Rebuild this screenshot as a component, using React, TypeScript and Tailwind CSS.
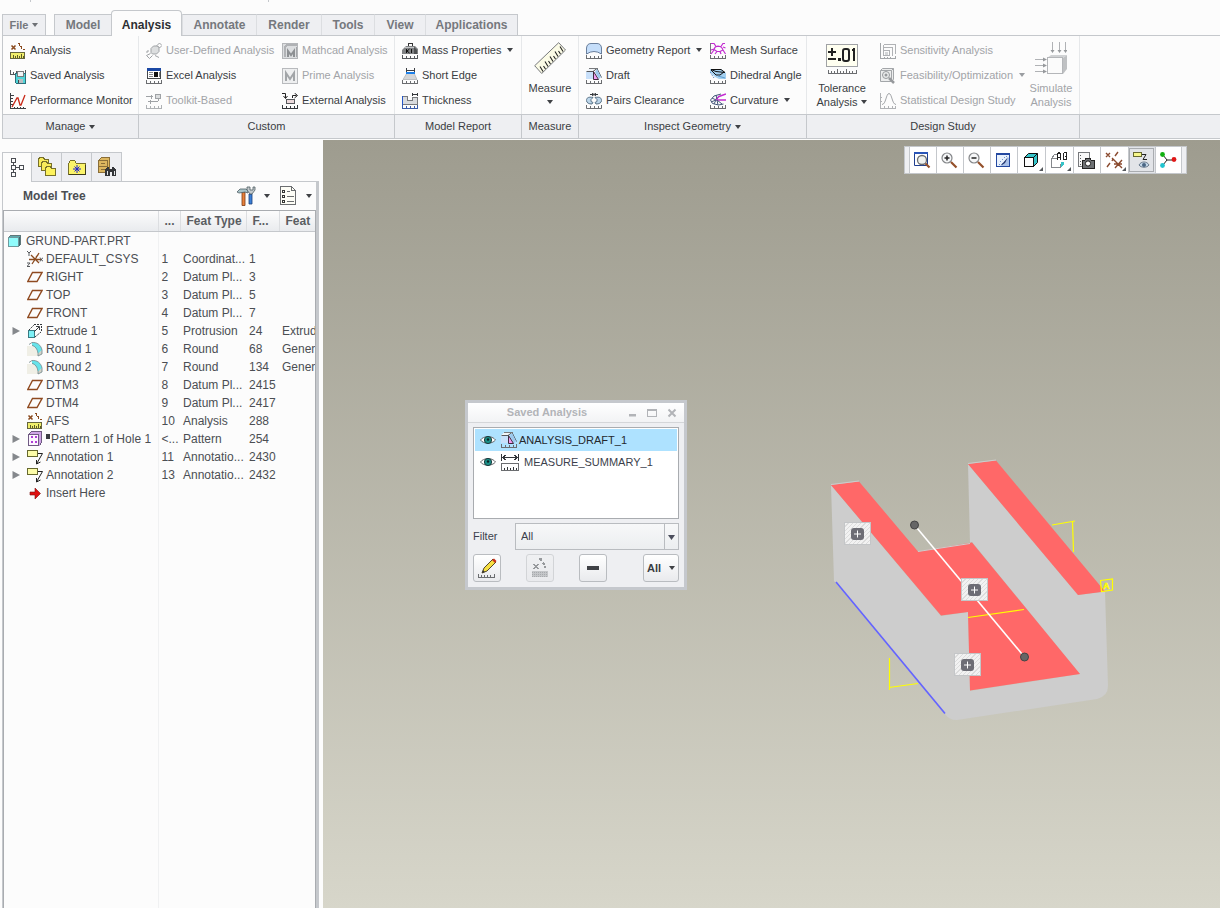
import React from 'react';

type IconProps = { children: React.ReactNode; size?: string; box?: string; smooth?: boolean };

function Svg({ children, size = 'size-4', box = '0 0 16 16', smooth }: IconProps) {
  return (
    <svg
      className={`${size} shrink-0`}
      viewBox={box}
      fill="none"
      aria-hidden="true"
      shapeRendering={smooth ? 'auto' : 'crispEdges'}
    >
      {children}
    </svg>
  );
}

function Scale({ color = '#6b6d70' }: { color?: string }) {
  return <path d="M.5 12v3.5h15V12M4.5 13v2M8.5 13v2M12.5 13v2" stroke={color} />;
}

function Arrow({ className = 'text-[#3f4145]' }: { className?: string }) {
  return (
    <svg className={`h-1 w-1.5 shrink-0 ${className}`} viewBox="0 0 6 4" aria-hidden="true">
      <path d="M0 0h6L3 4z" fill="currentColor" />
    </svg>
  );
}

/* ---------- ribbon icons ---------- */

const AnalysisIcon = () => (
  <Svg>
    <path d="M1.500 2.500l4 4M5.500 2.500l-4 4" stroke="#8a4a1e" strokeWidth="1.600" shapeRendering="auto" />
    <path d="M8 .5h2M9.500 1v2M10 3.500h2M11.500 4v2M13 6.500h2" stroke="#8a4a1e" strokeWidth="1.200" />
    <path d="M.5 9.500h14v6H.5z" fill="#f0ee6c" stroke="#66663c" />
    <path d="M3.500 12v3M5.500 13v2M7.500 12v3M9.500 13v2M11.500 11v4M13.500 13v2" stroke="#5c5c28" />
  </Svg>
);
const SavedIcon = () => (
  <Svg>
    <path d="M.5 2v5M.5 6.500h5M3.500 4v2M6.500 3v3M9.500 4v2M12.500 3v3M15.500 2v4" stroke="#55585c" />
    <path d="M5.500 5.500h10v10h-9l-1-1z" fill="#4fd5d8" stroke="#2e6f7a" />
    <path d="M7.500 3.500h6v5h-6z" fill="#f2f4f6" stroke="#77797c" />
    <path d="M8 11h5v4H8z" fill="#b9bdc0" />
    <path d="M8.500 12v3" stroke="#44474b" />
  </Svg>
);
const PerfIcon = () => (
  <Svg>
    <path d="M.5 0v15.500H16M.5 2.500h3M.5 5.500h2M.5 8.500h2M.5 11.500h2M4.500 14v1M7.500 14v1M10.500 14v1M13.500 14v1" stroke="#3c3f44" />
    <path d="M2 14l5-9h1l2 7h1l4-10" stroke="#c82818" strokeWidth="1.300" shapeRendering="auto" />
  </Svg>
);
const UdaIcon = () => (
  <Svg smooth>
    <path d="M5 5.500L7.500 3h4L13 4.500v4L10.500 11h-4L5 9.500z" fill="#dcdedf" stroke="#9fa2a5" />
    <path d="M11 2.500L13.500 0 16 2.500 13.500 5zM4.500 10.500L.5 12.500l3 3 3-3M3 8H1v2M9 12.500l4 2" stroke="#9fa2a5" />
  </Svg>
);
const ExcelIcon = () => (
  <Svg>
    <path d="M1.500 1.500h13v9h-13z" fill="#fff" stroke="#44474b" />
    <path d="M1 0h14v3H1z" fill="#1b48a4" />
    <path d="M8 4h4v5H8z" fill="#111" />
    <path d="M3 4.500h4M3 6.500h4M3 8.500h4M13 4v5" stroke="#84878b" />
    <Scale />
  </Svg>
);
const ToolkitIcon = () => (
  <Svg>
    <path d="M0 3.500h7M5.500 1.500v4M2 8.500h10M4.500 6.500v4M2.500 8v1" stroke="#9fa2a5" />
    <path d="M9.500 1.500h5v4h-5z" fill="#dcdedf" stroke="#9fa2a5" />
    <path d="M12.500 6v2" stroke="#9fa2a5" />
    <Scale color="#aeb1b4" />
  </Svg>
);
const MathcadIcon = () => (
  <Svg>
    <path d="M.5.5h15v15H.5z" fill="#dcdee0" stroke="#b4b6b9" />
    <path d="M3 14V4l2-2h10" stroke="#b0b2b5" strokeWidth="2" />
    <path d="M6 14V8l3 4 3-4v6" stroke="#8d9093" strokeWidth="2" shapeRendering="auto" />
    <path d="M14.500 4v10" stroke="#a4a6a9" />
  </Svg>
);
const PrimeIcon = () => (
  <Svg>
    <path d="M.5.5h15v15H.5z" fill="#eeeff0" stroke="#b8babd" />
    <path d="M4 13V5l4 6 4-6v8" stroke="#a2a5a8" strokeWidth="2" shapeRendering="auto" />
  </Svg>
);
const ExternalIcon = () => (
  <Svg>
    <path d="M0 .5h3.500V5M1.500 3l2 2.500 2-2.500M10.500 5V2.500h4M12.500 0l3 2.500-3 2.500" stroke="#222" shapeRendering="auto" />
    <path d="M4.500 6.500h8v4h-8z" fill="#ecdadc" stroke="#55585c" />
    <Scale color="#33363a" />
  </Svg>
);
const MassIcon = () => (
  <Svg>
    <path d="M6.500 3V.5h4V3" stroke="#333" />
    <path d="M4 3h9l3 3v5H0V7z" fill="#808284" shapeRendering="auto" />
    <path d="M3 4.500h9" stroke="#c4c6c8" />
    <path d="M12 4l3 3v4h-3z" fill="#4e5052" shapeRendering="auto" />
    <path d="M4.500 6v4M7.500 6L5 8l2.500 2M9.500 6v4" stroke="#111" shapeRendering="auto" />
    <Scale color="#55585c" />
  </Svg>
);
const ShortEdgeIcon = () => (
  <Svg>
    <path d="M4.500 0v4M12.500 0v4M5 2h7" stroke="#3c3f44" />
    <path d="M5 5h7l3 6.500H1z" fill="#d4d6d8" stroke="#9fa2a5" strokeWidth=".6" shapeRendering="auto" />
    <path d="M4 5h9" stroke="#1c7fe8" strokeWidth="2" />
    <Scale />
  </Svg>
);
const ThicknessIcon = () => (
  <Svg>
    <path d="M.5 3.500h5v4h5v-3h5v7H.5z" fill="#d9dbde" stroke="#77797c" />
    <path d="M.5 3v9" stroke="#2456c8" />
    <path d="M10.500 0v3M15.500 0v3M11 1.500h4" stroke="#33363a" />
    <Scale color="#3a5ca8" />
  </Svg>
);
const RulerIcon = () => (
  <Svg size="size-8" box="0 0 32 32" smooth>
    <path d="M.7 23.700L24.700.7 31.500 8 7.700 31.500z" fill="#fbfbe6" stroke="#77797c" />
    <path
      d="M9 29.500l-3-5M11.500 27l-2-3M14 24.500l-3-5M16.500 22l-2-3M19 19.500l-3-5M21.500 17l-2-3M24 14.500l-3-5M26.500 12l-2-3M29 9.500l-3-5"
      stroke="#222"
      strokeWidth="1.100"
    />
  </Svg>
);
const GeomIcon = () => (
  <Svg>
    <path d="M.5 11V5Q1 .5 5 .5h6q4 0 4.500 4.500v6Q8 6 .5 11z" fill="#c5defa" stroke="#6a7f9c" shapeRendering="auto" />
    <Scale />
  </Svg>
);
const DraftIcon = () => (
  <Svg>
    <path d="M0 4h7v7H0z" fill="#c8e0fa" />
    <path d="M3 .5h9L8 3.500H0z" fill="#f2f5f8" />
    <path d="M.5 3.500H7l4-3 4.500 9" stroke="#55585c" fill="none" shapeRendering="auto" />
    <path d="M3 .5h9" stroke="#77797c" />
    <path d="M11 1l4 8-2 2-4-7z" fill="#9cc8ee" shapeRendering="auto" />
    <path d="M7.500 3.500l5 8h-5z" fill="#f29cf0" stroke="#3f2a3c" shapeRendering="auto" />
    <Scale />
  </Svg>
);
const PairsIcon = () => (
  <Svg smooth>
    <path d="M4 1.500h3M9 1.500h3M6 0l2 1.500L6 3M10 0L8 1.500 10 3" stroke="#33363a" />
    <path d="M7 4.500C2 3.500.5 5 .5 7.500S3 11 6 11l1-1.500L5 8.500v-2zM9 4.500c5-1 6.500.5 6.500 3S13 11 10 11L9 9.500l2-1v-2z" fill="#bcd6ea" stroke="#5c7488" />
    <Scale />
  </Svg>
);
const MeshIcon = () => (
  <Svg>
    <path d="M.5 0v11M0 5.500h1" stroke="#77797c" />
    <path
      d="M1 .5h3l2 3h5l2-3h2M1 7l3-1M1 11l3-4M4 6.500q.5-3 4-3.500 4 .5 5 4M4 6.500l3 2h3l3-1.500M7 8.500L5 11M10 8.500l1 2.500M13 7l2.500 4M13 4l2.500 1"
      stroke="#c22bd0"
      strokeWidth="1.200"
      shapeRendering="auto"
    />
    <Scale />
  </Svg>
);
const DihedralIcon = () => (
  <Svg>
    <path d="M0 1h11l5 4v6H9L5 9 0 4z" fill="#a4d0f0" shapeRendering="auto" />
    <path d="M1 1.500h10l4 3-9-1zM1 2l5 5h4l4-3" stroke="#111" shapeRendering="auto" />
    <path d="M0 4l4 6" stroke="#3471b4" strokeDasharray="1 1" shapeRendering="auto" />
    <path d="M8 8l7 2" stroke="#5c9cd0" shapeRendering="auto" />
    <Scale />
  </Svg>
);
const CurvatureIcon = () => (
  <Svg>
    <path d="M16 1L9 3.500 6 6.500M16 7H6" stroke="#c22bd0" strokeWidth="1.500" shapeRendering="auto" />
    <path d="M11 1L4 3 .5 7l2 3.500 6 1.500 5-1M2 5l4 2M6 2l1 4M1 9l5-2M4 11l2-4M8 12l-1-5M12 11L7 7" stroke="#44587a" shapeRendering="auto" />
    <Scale />
  </Svg>
);
const ToleranceIcon = () => (
  <Svg size="size-8" box="0 0 32 32">
    <path d="M.5 2.500h31v22H.5z" fill="#fffff0" stroke="#a0a2a5" />
    <path d="M2 10h8M6 6v8M2 17h8" stroke="#222" strokeWidth="2" />
    <path d="M12 17.500h3" stroke="#222" strokeWidth="3" />
    <rect x="17" y="7" width="6" height="12" rx="2" stroke="#222" strokeWidth="2" shapeRendering="auto" />
    <path d="M26 8h2V6v13" stroke="#222" strokeWidth="2" />
    <path
      d="M2 31.500h29M2.500 28v3M5.500 29v2M8.500 29v2M11.500 27v4M14.500 29v2M17.500 29v2M20.500 27v4M23.500 29v2M26.500 29v2M30.500 28v3"
      stroke="#6b6d70"
    />
  </Svg>
);
const SensitivityIcon = () => (
  <Svg>
    <path d="M.5 0v15.500H15V13M4.500 14v1M7.500 14v1M10.500 14v1" stroke="#a3a6a9" />
    <path d="M3.500 1.500h12v9M3.500 4.500h9v8M3.500 7.500h6v5h-6zM3.500 1.500v6" stroke="#b0b2b5" />
    <path d="M5 9h3v3H5z" fill="#d4d6d8" />
  </Svg>
);
const FeasibilityIcon = () => (
  <Svg smooth>
    <path d="M.5 2.500h11v11H.5zM.5 2.500l2-2h11v11l-2 2M11.500 2.500l2-2" fill="#eceded" stroke="#a3a6a9" />
    <circle cx="6" cy="7" r="3.500" stroke="#96999c" />
    <circle cx="6" cy="7" r="1.500" fill="#96999c" />
    <path d="M9 10l5 5" stroke="#96999c" strokeWidth="2.500" />
  </Svg>
);
const StatIcon = () => (
  <Svg>
    <path d="M.5 0v15.500h15V13M4.500 13v2M8.500 13v2M12.500 13v2M0 4.500h2M0 8.500h2" stroke="#b0b2b5" />
    <path d="M2 11.500c4 0 4-11 7-11s3 11 7 11" stroke="#a3a6a9" shapeRendering="auto" />
  </Svg>
);
const SimulateIcon = () => (
  <Svg size="size-8" box="0 0 32 32">
    <path d="M17.500 0v10M24.500 0v10M30.500 0v10M0 17.500h11M0 23.500h11M0 29.500h11" stroke="#b0b2b5" />
    <path
      d="M15.500 8h4l-2 3zM22.500 8h4l-2 3zM28.500 8h4l-2 3zM8 15.500v4l4-2zM8 21.500v4l4-2zM8 27.500v4l4-2z"
      fill="#96999c"
      shapeRendering="auto"
    />
    <path d="M12 16l4-3h16l-4 3z" fill="#d0d2d4" shapeRendering="auto" />
    <path d="M28 16l4-3v14l-4 5z" fill="#bfc1c3" shapeRendering="auto" />
    <path d="M12.500 15.500h15v16h-15z" fill="#fbfbfb" stroke="#b4b6b9" />
  </Svg>
);

/* ---------- ribbon ---------- */

type CmdProps = { icon: React.ReactNode; label: string; disabled?: boolean; menu?: boolean };

function Cmd({ icon, label, disabled, menu }: CmdProps) {
  return (
    <button
      type="button"
      disabled={disabled}
      className="flex h-[25px] items-center gap-1 whitespace-nowrap text-[11px] text-[#3a3d42] disabled:text-[#a2a4a8]"
    >
      {icon}
      <span>{label}</span>
      {menu && (
        <span className="ml-0.5 pb-0.5">
          <Arrow className={disabled ? 'text-[#9a9da1]' : 'text-[#3f4145]'} />
        </span>
      )}
    </button>
  );
}

function BigCmd({
  icon,
  lines,
  disabled,
  menu,
  width,
}: {
  icon: React.ReactNode;
  lines: string[];
  disabled?: boolean;
  menu?: boolean;
  width: string;
}) {
  return (
    <button
      type="button"
      disabled={disabled}
      className={`flex flex-col items-center pt-1 text-[11px] leading-[14px] text-[#3a3d42] disabled:text-[#a2a4a8] ${width}`}
    >
      {icon}
      <span className="mt-[7px]">{lines[0]}</span>
      <span className="flex h-[14px] items-center gap-1">
        {lines[1] && <span>{lines[1]}</span>}
        {menu && <Arrow />}
      </span>
    </button>
  );
}

function Group({
  title,
  width,
  children,
  menu,
}: {
  title: string;
  width: string;
  children: React.ReactNode;
  menu?: boolean;
}) {
  return (
    <section className={`flex shrink-0 flex-col ${width}`}>
      <div className="flex h-[78px] border-r border-[#e6e8ea] pt-0.5">{children}</div>
      <h2 className="flex h-6 items-center justify-center gap-1 border-t border-r border-[#c5c8cc] bg-[#eeeff2] text-[11px] text-[#3a3d42]">
        {title}
        {menu && <Arrow />}
      </h2>
    </section>
  );
}

function Tab({ label, width, active, last, first }: { label: string; width: string; active?: boolean; last?: boolean; first?: boolean }) {
  const look = active
    ? 'relative -mb-px h-[26px] rounded-t-sm border-x border-t border-[#c5c8cc] bg-[#fcfcfc] pt-0.5 text-[#2c2f33]'
    : `h-[21px] border-t border-t-[#c5c8cc] bg-[#eeeff2] text-[#75787d] ${first ? 'border-l border-l-[#c5c8cc]' : ''} ${
        last ? 'border-r border-l border-r-[#c5c8cc] border-l-[#dcdee1]' : !first ? 'border-l border-l-[#dcdee1]' : ''
      }`;
  return (
    <button type="button" role="tab" aria-selected={!!active} className={`shrink-0 text-[12px] leading-5 font-bold ${width} ${look}`}>
      {label}
    </button>
  );
}

function Ribbon() {
  return (
    <header className="pb-px pl-0.5">
      <div className="flex h-0.5 pl-7">
        <span className="h-0.5 w-px bg-[#c5c8cc]" />
        <span className="ml-[237px] h-0.5 w-px bg-[#c5c8cc]" />
      </div>
      <nav className="flex h-[33px] items-end" role="tablist">
        <button
          type="button"
          className="mr-2 flex h-[21px] w-11 shrink-0 items-center justify-center gap-1 border-x border-t border-[#c5c8cc] bg-[#eeeff2] text-[11px] font-bold text-[#75787d]"
        >
          File <Arrow className="text-[#6d7075]" />
        </button>
        <Tab label="Model" width="w-[57px]" first />
        <Tab label="Analysis" width="w-[71px]" active />
        <Tab label="Annotate" width="w-[74px]" />
        <Tab label="Render" width="w-[65px]" />
        <Tab label="Tools" width="w-[53px]" />
        <Tab label="View" width="w-[51px]" />
        <Tab label="Applications" width="w-[93px]" last />
      </nav>
      <div className="flex border-y border-l border-[#c5c8cc]">
        <Group title="Manage" width="w-[136px]" menu>
          <div className="pl-[7px]">
            <Cmd icon={<AnalysisIcon />} label="Analysis" />
            <Cmd icon={<SavedIcon />} label="Saved Analysis" />
            <Cmd icon={<PerfIcon />} label="Performance Monitor" />
          </div>
        </Group>
        <Group title="Custom" width="w-64">
          <div className="w-[143px] pl-[7px]">
            <Cmd icon={<UdaIcon />} label="User-Defined Analysis" disabled />
            <Cmd icon={<ExcelIcon />} label="Excel Analysis" />
            <Cmd icon={<ToolkitIcon />} label="Toolkit-Based" disabled />
          </div>
          <div>
            <Cmd icon={<MathcadIcon />} label="Mathcad Analysis" disabled />
            <Cmd icon={<PrimeIcon />} label="Prime Analysis" disabled />
            <Cmd icon={<ExternalIcon />} label="External Analysis" />
          </div>
        </Group>
        <Group title="Model Report" width="w-[127px]">
          <div className="pl-[7px]">
            <Cmd icon={<MassIcon />} label="Mass Properties" menu />
            <Cmd icon={<ShortEdgeIcon />} label="Short Edge" />
            <Cmd icon={<ThicknessIcon />} label="Thickness" />
          </div>
        </Group>
        <Group title="Measure" width="w-[57px]">
          <BigCmd icon={<RulerIcon />} lines={['Measure']} menu width="w-full" />
        </Group>
        <Group title="Inspect Geometry" width="w-[228px]" menu>
          <div className="w-[131px] pl-[7px]">
            <Cmd icon={<GeomIcon />} label="Geometry Report" menu />
            <Cmd icon={<DraftIcon />} label="Draft" />
            <Cmd icon={<PairsIcon />} label="Pairs Clearance" />
          </div>
          <div>
            <Cmd icon={<MeshIcon />} label="Mesh Surface" />
            <Cmd icon={<DihedralIcon />} label="Dihedral Angle" />
            <Cmd icon={<CurvatureIcon />} label="Curvature" menu />
          </div>
        </Group>
        <Group title="Design Study" width="w-[273px]">
          <BigCmd icon={<ToleranceIcon />} lines={['Tolerance', 'Analysis']} menu width="mr-[3px] w-[70px]" />
          <div className="w-[143px]">
            <Cmd icon={<SensitivityIcon />} label="Sensitivity Analysis" disabled />
            <Cmd icon={<FeasibilityIcon />} label="Feasibility/Optimization" disabled menu />
            <Cmd icon={<StatIcon />} label="Statistical Design Study" disabled />
          </div>
          <BigCmd icon={<SimulateIcon />} lines={['Simulate', 'Analysis']} disabled width="w-14" />
        </Group>
        <div className="flex grow flex-col">
          <div className="h-[78px]" />
          <div className="h-6 border-t border-[#c5c8cc] bg-[#eeeff2]" />
        </div>
      </div>
    </header>
  );
}

/* ---------- model tree ---------- */

const CubeIcon = () => (
  <Svg size="size-3.5" box="0 0 14 14">
    <path d="M.5 3.500l2-2h10v9l-2 2" fill="#5fa9ad" stroke="#5f777a" />
    <path d="M.5 3.500h10v9H.5z" fill="#8ffcfc" stroke="#6f9a9e" />
    <path d="M11.500 3v9" stroke="#3a6a70" />
  </Svg>
);
const CsysIcon = () => (
  <Svg smooth>
    <path d="M2 8.500h12M4 4l8 8M12 2L8 8.500 5 13M11 4l-2 2" stroke="#8a4a1e" strokeWidth="1.300" />
    <path d="M0 0l2 2 2-2M2 2v3M0 12h3l-3 3.500h3M13 6.500l3 4M16 6.500l-3 4" stroke="#55585c" />
  </Svg>
);
const PlaneIcon = () => (
  <Svg smooth>
    <path d="M5.500 3.500h9.500L10 12.500H.8z" stroke="#8f4a20" strokeWidth="1.400" />
  </Svg>
);
const ExtrudeIcon = () => (
  <Svg>
    <path d="M7 1.500h7.500V9" stroke="#33363a" strokeDasharray="2 1" />
    <path d="M2 7l5-5M8 14l6-5" stroke="#33363a" strokeDasharray="2 1" shapeRendering="auto" />
    <path d="M1.500 7.500h6v7h-6z" fill="#7df0f5" stroke="#3a7a82" />
    <path d="M7 9l5-5M9 3.500h3.500V7" stroke="#3c3f44" shapeRendering="auto" />
  </Svg>
);
const RoundIcon = () => (
  <Svg smooth>
    <path d="M0 5h4q6 1 7 7v3H0z" fill="#f0efe6" />
    <path d="M11 15v-3l4-3v4z" fill="#d4d3c8" />
    <path d="M5 1.500C10 1 14 4 15 9l-4 3.500C10.500 8 8 5.500 5 4.500z" fill="#67e3ea" />
    <path d="M2 3.500L5 1.500C10 1 14 4 15 9v4l-4 2M5 4.500c3 .5 5.500 3.500 6 8V15" stroke="#6f8488" strokeWidth=".8" />
  </Svg>
);
const PatternIcon = () => (
  <Svg>
    <path d="M1.500 3.500l3-3h10v11l-2 3" fill="#cfa5e6" stroke="#6f5a82" />
    <path d="M1.500 3.500h10v11h-10z" fill="#fdf5ff" stroke="#6f5a82" />
    <path d="M4 5h2v2H4zM8 5h2v2H8zM4 10h2v2H4zM8 10h2v2H8z" fill="#b03fd6" />
  </Svg>
);
const AnnotationIcon = () => (
  <Svg>
    <path d="M.5 1.500h10v6H.5z" fill="#fcfca8" stroke="#66682f" />
    <path d="M11 4.500h4.500M15.500 4.500L10 14" stroke="#222" shapeRendering="auto" />
    <path d="M9.500 11v4l4-2" stroke="#222" shapeRendering="auto" />
  </Svg>
);
const InsertIcon = () => (
  <Svg>
    <path d="M3 7h5V3l5.500 5.500L8 14v-4H3z" fill="#e01010" stroke="#7a1010" strokeWidth=".6" shapeRendering="auto" />
  </Svg>
);

type Row = { icon: React.ReactNode; name: string; no?: string; type?: string; id?: string; sub?: string; open?: boolean; mark?: boolean };

const rows: Row[] = [
  { icon: <CsysIcon />, name: 'DEFAULT_CSYS', no: '1', type: 'Coordinat...', id: '1' },
  { icon: <PlaneIcon />, name: 'RIGHT', no: '2', type: 'Datum Pl...', id: '3' },
  { icon: <PlaneIcon />, name: 'TOP', no: '3', type: 'Datum Pl...', id: '5' },
  { icon: <PlaneIcon />, name: 'FRONT', no: '4', type: 'Datum Pl...', id: '7' },
  { icon: <ExtrudeIcon />, name: 'Extrude 1', no: '5', type: 'Protrusion', id: '24', sub: 'Extrud', open: true },
  { icon: <RoundIcon />, name: 'Round 1', no: '6', type: 'Round', id: '68', sub: 'Gener' },
  { icon: <RoundIcon />, name: 'Round 2', no: '7', type: 'Round', id: '134', sub: 'Gener' },
  { icon: <PlaneIcon />, name: 'DTM3', no: '8', type: 'Datum Pl...', id: '2415' },
  { icon: <PlaneIcon />, name: 'DTM4', no: '9', type: 'Datum Pl...', id: '2417' },
  { icon: <AnalysisIcon />, name: 'AFS', no: '10', type: 'Analysis', id: '288' },
  { icon: <PatternIcon />, name: 'Pattern 1 of Hole 1', no: '<...', type: 'Pattern', id: '254', open: true, mark: true },
  { icon: <AnnotationIcon />, name: 'Annotation 1', no: '11', type: 'Annotatio...', id: '2430', open: true },
  { icon: <AnnotationIcon />, name: 'Annotation 2', no: '13', type: 'Annotatio...', id: '2432', open: true },
  { icon: <InsertIcon />, name: 'Insert Here' },
];

const TreeTabIcon = () => (
  <Svg size="size-5" box="0 0 20 20">
    <path
      d="M4.500.5h4v4h-4zM4.500 7.500h4v4h-4zM4.500 14.500h4v4h-4zM12.500 7.500h4v4h-4zM6.500 5v2M6.500 12v2M9 9.500h3"
      stroke="#4b4e53"
    />
  </Svg>
);
const FoldersIcon = () => (
  <Svg size="size-5" box="0 0 20 20">
    <path d="M1.500 2.500l1-2h4l1 2h4v7h-10z" fill="#f7ea5a" stroke="#77702a" />
    <path d="M4.500 6.500l1-2h4l1 2h4v7h-10z" fill="#f7ea5a" stroke="#77702a" />
    <path d="M8.500 11.500l1-2h4l1 2h4v7h-10z" fill="#fdf25c" stroke="#77702a" />
  </Svg>
);
const StarFolderIcon = () => (
  <Svg size="size-5" box="0 0 20 20">
    <path d="M1.500 6.500l2-3h4l2 3h9v11h-17z" fill="#fbf46a" stroke="#77702a" />
    <path d="M2 17.500h17M18.500 8v10" stroke="#3f3c1c" />
    <path d="M10 8v8M6 12h8M7.500 9.500l5 5M12.500 9.500l-5 5" stroke="#2222d0" shapeRendering="auto" />
  </Svg>
);
const CabinetIcon = () => (
  <Svg size="size-5" box="0 0 20 20">
    <path d="M1.500 3.500l3-3h8v12l-2 3h-9z" fill="#dcb65f" stroke="#8a6e38" />
    <path d="M2 3.500h8.500v12M2 9.500h8M4 6.500h4M4 12.500h4" stroke="#8a6e38" />
    <path d="M8 12l2-2h2v2h3v-2h2l2 3v6h-4v-4h-2v4H8z" fill="#333538" />
    <path d="M10 14h1v4h-1zM17 14h1v4h-1z" fill="#e4e6e8" />
  </Svg>
);
const ToolsIcon = () => (
  <Svg size="size-5" box="0 0 20 20" smooth>
    <path d="M6 6h3v13.500H6z" fill="#e8803a" stroke="#7a3a16" strokeWidth=".8" />
    <path d="M1 6l3-3h6l2 2v2L9 6 3 7z" fill="#a9c4c9" stroke="#4f5d63" strokeWidth=".8" />
    <path d="M13 8h3v10h-3z" fill="#3b7fd6" stroke="#1c3f78" strokeWidth=".8" />
    <path d="M11 1v3l3 4h2l3-4V1l-2 0v3h-3V1z" fill="#c4cacd" stroke="#4f5d63" strokeWidth=".8" />
  </Svg>
);
const SettingsListIcon = () => (
  <Svg size="size-5" box="0 0 20 20">
    <path d="M2.500.5h11l4 4v14h-15z" fill="#fdfdf6" stroke="#6b6d70" />
    <path d="M13.500.5v4h4M9 5.500h3M9 10.500h7M9 15.500h7" stroke="#6b6d70" />
    <path d="M4.500 4.500h2v2h-2zM4.500 9.500h2v2h-2zM4.500 14.500h2v2h-2z" stroke="#333" />
  </Svg>
);

function SideTab({ icon, label, active }: { icon: React.ReactNode; label: string; active?: boolean }) {
  return (
    <button
      type="button"
      aria-label={label}
      className={`flex h-[29px] w-[30px] items-center justify-center border-t border-r border-[#c5c8cc] ${
        active ? 'relative -mb-px h-[30px] border-l bg-[#fcfcfc]' : 'bg-[#eeeff2]'
      }`}
    >
      {icon}
    </button>
  );
}

function ModelTree() {
  return (
    <aside className="flex w-[323px] shrink-0 flex-col pt-3 pr-1 pl-0.5 text-[#4b4e53]">
      <div className="flex h-[29px] items-start">
        <SideTab icon={<TreeTabIcon />} label="Model Tree tab" active />
        <SideTab icon={<FoldersIcon />} label="Folder Browser" />
        <SideTab icon={<StarFolderIcon />} label="Favorites" />
        <SideTab icon={<CabinetIcon />} label="Search" />
      </div>
      <div className="flex grow flex-col border-r-[3px] border-l border-[#c5c8cc]">
        <div className="flex h-[29px] items-center border-t border-[#c5c8cc] pr-1 pl-5">
          <h1 className="text-[12px] font-bold text-[#4b4e53]">Model Tree</h1>
          <button type="button" aria-label="Tree tools" className="ml-auto flex items-center gap-2">
            <ToolsIcon />
            <Arrow />
          </button>
          <button type="button" aria-label="Tree settings" className="ml-2 flex items-center gap-2">
            <SettingsListIcon />
            <Arrow />
          </button>
        </div>
        <div className="flex grow flex-col border-t border-r border-l border-[#a9acb0]">
          <table className="w-full table-fixed border-collapse text-left text-[12px] leading-[18px]">
            <colgroup>
              <col className="w-[154px]" />
              <col className="w-[22px]" />
              <col className="w-[66px]" />
              <col className="w-[33px]" />
              <col />
            </colgroup>
            <thead>
              <tr className="h-[20px] bg-linear-to-b from-[#fcfcfc] to-[#e9ebee]">
                <th className="border-b border-[#c5c8cc] p-0" aria-label="Name" />
                {['...', 'Feat Type', 'F...', 'Feat'].map((h) => (
                  <th
                    key={h}
                    className="overflow-hidden border-b border-l border-b-[#c5c8cc] border-l-[#dcdee1] py-0 pr-0 pl-1.5 font-bold whitespace-nowrap text-[#5a5d62]"
                  >
                    {h}
                  </th>
                ))}
              </tr>
            </thead>
            <tbody>
              <tr className="h-[18px]">
                <td className="p-0">
                  <span className="flex h-[18px] items-center gap-1 pl-1 whitespace-nowrap">
                    <CubeIcon />
                    GRUND-PART.PRT
                  </span>
                </td>
                <td className="border-l border-[#f0f1f2] p-0" />
                <td colSpan={3} />
              </tr>
              {rows.map((r) => (
                <tr key={r.name} className="h-[18px] whitespace-nowrap">
                  <td className="p-0">
                    <span className="flex h-[18px] items-center">
                      <span className="flex w-[23px] justify-center">
                        {r.open && (
                          <button type="button" aria-label={`Expand ${r.name}`}>
                            <svg className="h-2 w-2" viewBox="0 0 8 8">
                              <path d="M.5 0v8L8 4z" fill="#85888c" />
                            </svg>
                          </button>
                        )}
                      </span>
                      {r.icon}
                      <span className="flex items-center gap-px pl-[3px]">
                        {r.mark && <span className="mb-1 h-[5px] w-1 bg-[#3a3d42]" />}
                        {r.name}
                      </span>
                    </span>
                  </td>
                  <td className="border-l border-[#f0f1f2] py-0 pr-0 pl-[3px]">{r.no}</td>
                  <td className="py-0 pr-0 pl-[3px]">{r.type}</td>
                  <td className="py-0 pr-0 pl-[3px]">{r.id}</td>
                  <td className="overflow-hidden py-0 pr-0 pl-[3px]">{r.sub}</td>
                </tr>
              ))}
            </tbody>
          </table>
          <div className="flex grow">
            <span className="w-[155px] border-r border-[#f0f1f2]" />
          </div>
        </div>
      </div>
    </aside>
  );
}

/* ---------- view toolbar ---------- */

const Lens = () => (
  <>
    <circle cx="7" cy="7" r="5" fill="#f6f7f8" stroke="#85878a" strokeWidth="1.200" />
    <path d="M11 11l5.500 5.500" stroke="#94502a" strokeWidth="2.200" />
  </>
);
const RefitIcon = () => (
  <Svg size="size-[18px]" box="0 0 18 18" smooth>
    <path d="M1.500 2.500h13v12h-13z" stroke="#1f3f8f" fill="#fff" />
    <path d="M1 2h14" stroke="#2a55b8" strokeWidth="2" />
    <circle cx="9" cy="9" r="4.500" fill="#f0f2ee" stroke="#6b6d70" strokeWidth="1.300" />
    <path d="M12.500 12.500l4 4" stroke="#94502a" strokeWidth="2.200" />
  </Svg>
);
const ZoomInIcon = () => (
  <Svg size="size-[18px]" box="0 0 18 18" smooth>
    <Lens />
    <path d="M4.500 7h5M7 4.500v5" stroke="#222" strokeWidth="1.500" />
  </Svg>
);
const ZoomOutIcon = () => (
  <Svg size="size-[18px]" box="0 0 18 18" smooth>
    <Lens />
    <path d="M4.500 7h5" stroke="#222" strokeWidth="1.500" />
  </Svg>
);
const RepaintIcon = () => (
  <Svg size="size-[18px]" box="0 0 18 18">
    <path d="M2.500 2.500h13v13h-13z" fill="#a8c0e8" stroke="#2348a0" />
    <path d="M2 2.500h14" stroke="#2348a0" strokeWidth="2" />
    <path d="M3 4h12v2L6 15H3z" fill="#e8f1fc" shapeRendering="auto" />
    <path d="M8 8h1M10 6h1M6 10h1M5 13h1M12 5h1M8 12h1" stroke="#6f94cc" />
    <path d="M7 14l2-2 5-6-3 6-3 2z" fill="#22336a" shapeRendering="auto" />
  </Svg>
);
const StyleIcon = () => (
  <Svg size="size-[18px]" box="0 0 18 18">
    <path d="M2.500 6.500l4-4h9v9l-4 4z" fill="#35c4c9" stroke="#111" shapeRendering="auto" />
    <path d="M2.500 6.500h9v9h-9z" fill="#fdfdfd" stroke="#111" strokeWidth="1.300" />
    <path d="M11.500 6.500l4-4" stroke="#111" shapeRendering="auto" />
  </Svg>
);
const OrientIcon = () => (
  <Svg size="size-[18px]" box="0 0 18 18">
    <path d="M1.500 16.500v-9l3-4h2M1.500 16.500h9v-4M1.500 7.500h5" stroke="#85888c" />
    <path d="M11 11h3v2l-3 3z" fill="#35c4c9" />
    <path d="M7.500 9V3.500l1-2h1l1 2V9M7.500 6.500h3M13.500 1.500v7h3v-3h-2M13.500 1.500h3v3" stroke="#222" />
  </Svg>
);
const CameraIcon = () => (
  <Svg size="size-[18px]" box="0 0 18 18">
    <path d="M1.500 1.500h11v14h-11z" fill="#f8f8f8" stroke="#77797c" />
    <path d="M3 4.500h1M3 7.500h1M3 10.500h1M3 13.500h1" stroke="#55585c" />
    <path d="M5 9h3l1-2h4l1 2h3v8H5z" fill="#6e7174" stroke="#222" />
    <circle cx="11" cy="12.500" r="2.600" fill="#fff" stroke="#222" shapeRendering="auto" />
  </Svg>
);
const DatumIcon = () => (
  <Svg size="size-[18px]" box="0 0 18 18" smooth>
    <path
      d="M1 2l4 4M5 2L1 6M13 1l-3 4M8 8l-1 2M5 12l-3 4M7 7l2 2M9 9l8 8M17 9l-7 8M9 13h8"
      stroke="#8a4a2e"
      strokeWidth="1.400"
    />
  </Svg>
);
const AnnoDisplayIcon = () => (
  <Svg size="size-[18px]" box="0 0 18 18">
    <path d="M1.500 1.500h8v4h-8z" fill="#f6f68a" stroke="#66682f" />
    <path d="M10 3.500h4L11 8.500h4" stroke="#222" shapeRendering="auto" />
    <path d="M7 14c2-4 8-4 10 0-2 3-8 3-10 0z" fill="#c4d8ea" stroke="#6a7a8c" shapeRendering="auto" />
    <circle cx="12" cy="14" r="2" fill="#4a6684" shapeRendering="auto" />
  </Svg>
);
const SpinIcon = () => (
  <Svg size="size-[18px]" box="0 0 18 18" smooth>
    <path d="M4 4l4 5h7M8 9l-4 5" stroke="#222" />
    <circle cx="3.500" cy="3.500" r="2.400" fill="#10b010" />
    <circle cx="15" cy="8.500" r="2.400" fill="#e01818" />
    <circle cx="3.500" cy="14.500" r="2.400" fill="#20c4d0" />
  </Svg>
);

const tools: { label: string; icon: React.ReactNode; menu?: boolean; on?: boolean }[] = [
  { label: 'Refit', icon: <RefitIcon /> },
  { label: 'Zoom In', icon: <ZoomInIcon /> },
  { label: 'Zoom Out', icon: <ZoomOutIcon /> },
  { label: 'Repaint', icon: <RepaintIcon /> },
  { label: 'Display Style', icon: <StyleIcon />, menu: true },
  { label: 'Saved Orientations', icon: <OrientIcon />, menu: true },
  { label: 'View Manager', icon: <CameraIcon /> },
  { label: 'Datum Display', icon: <DatumIcon />, menu: true },
  { label: 'Annotation Display', icon: <AnnoDisplayIcon />, on: true },
  { label: 'Spin Center', icon: <SpinIcon /> },
];

function ViewToolbar() {
  return (
    <div className="flex h-7 border border-[#c5c8cc] bg-[#eeeff2] px-1" role="toolbar">
      {tools.map((t) => (
        <button
          key={t.label}
          type="button"
          aria-label={t.label}
          className={`relative flex items-center justify-center border-l border-[#c5c8cc] pr-0.5 last:border-r ${
            t.menu ? 'w-7' : 'w-[27px]'
          } ${t.on ? 'bg-[#e2e4e8] outline outline-1 -outline-offset-2 outline-[#a9acb0]' : 'bg-white'}`}
        >
          {t.icon}
          {t.menu && (
            <svg className="absolute right-0.5 bottom-0.5 size-1" viewBox="0 0 4 4">
              <path d="M4 0v4H0z" fill="#55585c" />
            </svg>
          )}
        </button>
      ))}
    </div>
  );
}

/* ---------- part ---------- */

function Part() {
  return (
    <svg
      className="absolute top-[310px] left-[497px] h-[280px] w-[300px]"
      viewBox="820 450 300 280"
      fill="none"
      role="img"
      aria-label="GRUND-PART"
    >
      <path d="M1052 525l23-4M1072.500 521l1 31" stroke="#ffff00" strokeWidth="1.200" />
      <path
        d="M831 485L941 616 968 612 970 691 1080 674 972 542 970 543 968 464 1078 595 1105 591.500 1108 686Q1108 696 1097 699L957 720Q949 720 945 714L834 581Z"
        fill="#cdcdcd"
      />
      <path d="M831 485L859 481.500 918 551.500 972 542.500 1080 674 970 690.500 968 612 941 615.500Z" fill="#ff6868" />
      <path d="M968 464L996 460.500 1105 591.500 1078 595Z" fill="#ff6868" />
      <path d="M831 484.500L859 481M918 551.500L970 543.500M968 463.500L996 460" stroke="#cdcdcd" />
      <path d="M836 582L945 713.500" stroke="#6464ff" strokeWidth="1.700" />
      <path d="M889.500 658v32M889 687.500l29-4M968 617.500l56-8" stroke="#ffff00" strokeWidth="1.200" />
      <path d="M1100.500 580.500l12-1.500v11l-11 1.500z" stroke="#ffff00" strokeWidth="1.200" />
      <text x="1103" y="589" fontSize="9" fontWeight="bold" fill="#ffff00" stroke="#ffff00" strokeWidth=".5" fontFamily="Liberation Sans, sans-serif">
        A
      </text>
      <path d="M914.500 525L1024.500 657" stroke="#fff" strokeWidth="1.600" />
      <circle cx="914.500" cy="525" r="4" fill="#666" stroke="#444" />
      <circle cx="1024.500" cy="657" r="4" fill="#666" stroke="#444" />
    </svg>
  );
}

function Badge({ place, label }: { place: string; label: string }) {
  return (
    <button
      type="button"
      aria-label={label}
      className={`absolute flex h-[23px] w-[27px] items-center justify-center border border-[#c4c6c8] bg-[repeating-linear-gradient(135deg,#f2f2f2_0_2px,#dcdcdc_2px_3px)] ${place}`}
    >
      <svg className="h-3 w-[13px]" viewBox="0 0 13 12">
        <rect width="13" height="12" rx="3" fill="#6d6d75" />
        <path d="M3 6h7M6.500 2.500v7" stroke="#fff" strokeWidth="1" />
      </svg>
    </button>
  );
}

/* ---------- saved analysis window ---------- */

const EyeIcon = () => (
  <Svg size="h-[10px] w-4" box="0 0 16 10" smooth>
    <path d="M.5 5C3 1 12 0 15.500 5 12 9.500 3 9 .5 5z" fill="#fff" stroke="#66696d" />
    <circle cx="8" cy="5" r="3.600" fill="#1b9088" stroke="#1a3a3c" />
    <circle cx="8" cy="4.500" r="1.200" fill="#0c2224" />
  </Svg>
);
const SummaryIcon = () => (
  <Svg size="h-[17px] w-[18px]" box="0 0 18 17">
    <path d="M.5 0v7M17.500 0v7M2 3.500h14M4.500 1L2 3.500 4.500 6M13.500 1L16 3.500 13.500 6" stroke="#33363a" />
    <path d="M.5 9.500h17v7H.5z" fill="#fff" stroke="#6b6d70" />
    <path d="M3.500 14v2M6.500 13v3M9.500 14v2M12.500 13v3M15.500 14v2" stroke="#33363a" />
  </Svg>
);
const PencilIcon = () => (
  <Svg size="size-5" box="0 0 20 20" smooth>
    <path d="M5 15L7 10 16 1l3 3-9 9z" fill="#f6df42" stroke="#55482a" />
    <path d="M15 2l3 3 1.500-2L17 .5z" fill="#c8301c" />
    <path d="M5 15l1-3 2 2z" fill="#333" />
    <path d="M1.500 16v3.500h16V16M4.500 17v2M7.500 17v2M10.500 17v2M13.500 17v2" stroke="#6b6d70" shapeRendering="crispEdges" />
  </Svg>
);
const FeatureIcon = () => (
  <Svg size="size-5" box="0 0 20 20">
    <path d="M4 6l4 5M8 6l-4 5M9 1h2v2M13 5l2 2M14 9h2" stroke="#96999c" strokeWidth="1.500" />
    <path d="M2 13h16v6H2z" fill="#c4c6c9" />
    <path d="M2 14.500h16M2 16.500h16M2 18.500h16" stroke="#a7aaad" strokeDasharray="1 1" />
  </Svg>
);

const square =
  'flex h-7 w-7 items-center justify-center rounded-[3px] border border-[#b9bcc0] bg-linear-to-b from-white to-[#e9eaed] disabled:border-[#d2d4d7] disabled:from-[#eff0f2] disabled:to-[#e9eaed]';

function SavedAnalysis() {
  return (
    <section
      className="absolute top-[260px] left-[142px] w-[222px] border-[3px] border-[#c5c8cd] bg-[#eeeff2] text-[11px] text-[#3c3f4c]"
      role="dialog"
      aria-label="Saved Analysis"
    >
      <header className="flex h-5 items-center justify-end border-b border-[#d4d6d9] bg-linear-to-b from-white to-[#f2f3f5] pr-1.5 text-[#b2b4b8]">
        <h2 className="grow text-center text-[11px] font-bold">Saved Analysis</h2>
        <button type="button" aria-label="Minimize">
          <svg className="size-3" viewBox="0 0 12 12">
            <path d="M3 7h7v2.500H3z" fill="currentColor" />
          </svg>
        </button>
        <button type="button" aria-label="Maximize" className="ml-2">
          <svg className="size-3" viewBox="0 0 12 12" shapeRendering="crispEdges">
            <path d="M1.500 2.500h9v7h-9zM1 3.500h10" stroke="currentColor" fill="none" />
          </svg>
        </button>
        <button type="button" aria-label="Close" className="ml-2">
          <svg className="size-3" viewBox="0 0 12 12">
            <path d="M2.500 2.500l7 7M9.500 2.500l-7 7" stroke="currentColor" strokeWidth="2" />
          </svg>
        </button>
      </header>
      <div className="px-[5px] pt-1 pb-[5px]">
        <ul className="h-[92px] border border-[#a9acb0] bg-white p-px">
          <li className="flex h-[22px] items-center gap-[5px] bg-[#aee2ff] pl-[5px] text-[#25282d]">
            <EyeIcon />
            <DraftIcon />
            <span className="-ml-[3px]">ANALYSIS_DRAFT_1</span>
          </li>
          <li className="flex h-[22px] items-center gap-[5px] pl-[5px]">
            <EyeIcon />
            <SummaryIcon />
            <span>MEASURE_SUMMARY_1</span>
          </li>
        </ul>
        <div className="mt-1 flex items-center">
          <label htmlFor="filter" className="w-[42px]">
            Filter
          </label>
          <div className="relative grow">
            <select
              id="filter"
              defaultValue="All"
              className="block h-[27px] w-full appearance-none border border-[#b9bcc0] bg-linear-to-b from-[#f7f8f9] to-[#eceef0] pl-[5px] text-[11px]"
            >
              <option>All</option>
            </select>
            <span className="pointer-events-none absolute inset-y-0 right-0 flex w-[15px] items-center justify-center border border-[#b9bcc0] pt-0.5">
              <svg className="h-[5px] w-[7px]" viewBox="0 0 7 5">
                <path d="M0 0h7L3.500 5z" fill="#4b4e5c" />
              </svg>
            </span>
          </div>
        </div>
        <div className="mt-1 flex">
          <button type="button" aria-label="Edit" className={square}>
            <PencilIcon />
          </button>
          <button type="button" aria-label="Create feature" disabled className={`ml-[25px] ${square}`}>
            <FeatureIcon />
          </button>
          <button type="button" aria-label="Remove" className={`ml-[25px] ${square}`}>
            <span className="h-1 w-3 bg-[#3f4145]" />
          </button>
          <button
            type="button"
            className="ml-auto flex h-7 w-9 items-center justify-between rounded-[3px] border border-[#b9bcc0] bg-linear-to-b from-white to-[#e9eaed] px-[3px] font-bold text-[#3a3d42]"
          >
            All <Arrow />
          </button>
        </div>
      </div>
    </section>
  );
}

export default function App() {
  return (
    <div className="flex min-h-screen flex-col bg-[#fcfcfc] font-['Liberation_Sans',Arial,sans-serif]">
      <Ribbon />
      <div className="flex grow">
        <ModelTree />
        <main className="relative grow overflow-hidden bg-linear-to-b from-[#9e9c8f] to-[#d7d6ca]">
          <div className="flex justify-end pt-1.5 pr-[33px]">
            <ViewToolbar />
          </div>
          <Part />
          <Badge place="top-[382px] left-[521px]" label="Expand result 1" />
          <Badge place="top-[438px] left-[638px]" label="Expand result 2" />
          <Badge place="top-[513px] left-[631px]" label="Expand result 3" />
          <SavedAnalysis />
        </main>
      </div>
    </div>
  );
}
